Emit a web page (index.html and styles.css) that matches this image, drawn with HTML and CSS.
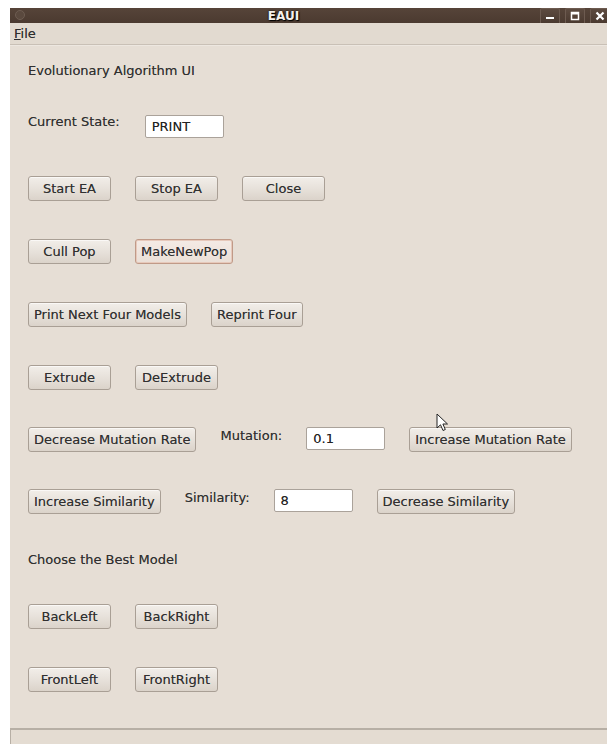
FILE: index.html
```html
<!DOCTYPE html>
<html>
<head>
<meta charset="utf-8">
<title>EAUI</title>
<link rel="stylesheet" href="styles.css">
</head>
<body>
<div class="window">
  <div class="titlebar">
    <span class="title-dot"></span>
    <span class="title">EAUI</span>
    <div class="wm-buttons">
      <span class="wm-btn"><svg width="10" height="10" viewBox="0 0 10 10"><rect x="1" y="6" width="8" height="2" fill="#fff"/></svg></span>
      <span class="wm-btn"><svg width="10" height="10" viewBox="0 0 10 10"><rect x="1.5" y="1.5" width="7" height="7" fill="none" stroke="#fff" stroke-width="1.5"/><rect x="1.5" y="1.5" width="7" height="2" fill="#fff"/></svg></span>
      <span class="wm-btn close"><svg width="10" height="10" viewBox="0 0 10 10"><path d="M1.5 1.5 L8.5 8.5 M8.5 1.5 L1.5 8.5" stroke="#fff" stroke-width="2.2"/></svg></span>
    </div>
  </div>
  <div class="menubar"><span class="menu-item"><u>F</u>ile</span></div>

  <div class="content">
    <div class="row heading">Evolutionary Algorithm UI</div>

    <div class="row state-row">
      <span class="label state-label">Current State:</span>
      <span class="field state-field">PRINT</span>
    </div>

    <div class="row after-state">
      <button class="btn">Start EA</button>
      <button class="btn">Stop EA</button>
      <button class="btn">Close</button>
    </div>

    <div class="row">
      <button class="btn">Cull Pop</button>
      <button class="btn focused">MakeNewPop</button>
    </div>

    <div class="row">
      <button class="btn">Print Next Four Models</button>
      <button class="btn">Reprint Four</button>
    </div>

    <div class="row">
      <button class="btn">Extrude</button>
      <button class="btn">DeExtrude</button>
    </div>

    <div class="row snug">
      <button class="btn">Decrease Mutation Rate</button>
      <span class="label">Mutation:</span>
      <span class="field">0.1</span>
      <button class="btn">Increase Mutation Rate</button>
    </div>

    <div class="row snug">
      <button class="btn">Increase Similarity</button>
      <span class="label">Similarity:</span>
      <span class="field">8</span>
      <button class="btn">Decrease Similarity</button>
    </div>

    <div class="row heading choose">Choose the Best Model</div>

    <div class="row near">
      <button class="btn">BackLeft</button>
      <button class="btn">BackRight</button>
    </div>

    <div class="row">
      <button class="btn">FrontLeft</button>
      <button class="btn">FrontRight</button>
    </div>
  </div>

  <div class="statusbar"></div>

  <svg class="pointer" width="14" height="20" viewBox="0 0 14 20">
    <path d="M1 1 L1 15 L4.5 11.8 L7 17.5 L9.3 16.5 L6.9 11 L11.5 11 Z" fill="#fff" stroke="#222" stroke-width="1" stroke-linejoin="round"/>
  </svg>
</div>
</body>
</html>
```

FILE: styles.css
```css
html, body {
  margin: 0;
  padding: 0;
  background: #ffffff;
}

body {
  width: 607px;
  height: 744px;
  overflow: hidden;
  font-family: "DejaVu Sans", "Liberation Sans", sans-serif;
  font-size: 13px;
  color: #303030;
}

.window {
  position: relative;
  margin: 8px 0 0 10px;
  height: 736px;
  background: #e6ded5;
  display: flex;
  flex-direction: column;
}

/* window manager title strip */
.titlebar {
  position: relative;
  height: 15px;
  background: linear-gradient(#564439, #4b3a30);
  display: flex;
  align-items: center;
  justify-content: center;
  overflow: hidden;
}

.title-dot {
  position: absolute;
  left: 5px;
  top: 2px;
  width: 8px;
  height: 8px;
  border-radius: 50%;
  border: 1px solid #6e5d52;
  background: #5a493e;
}

.title {
  color: #f4f0ec;
  font-weight: bold;
  font-size: 12px;
  line-height: 14px;
  margin-left: -50px;
  text-shadow: 0 0 2px #000, 1px 1px 1px #000;
}

.wm-buttons {
  position: absolute;
  right: -3px;
  top: 0;
  display: flex;
  gap: 5px;
}

.wm-btn {
  width: 20px;
  height: 15px;
  border: 1px solid #6d5b50;
  border-bottom: none;
  border-radius: 2px 2px 0 0;
  background: linear-gradient(#5d4b40, #4a392f);
  display: flex;
  align-items: center;
  justify-content: center;
  box-sizing: border-box;
}

.menubar {
  height: 21px;
  background: #e2dad0;
  border-bottom: 1px solid #c9c0b6;
  box-shadow: 0 1px 0 #ede7e0;
  display: flex;
  align-items: center;
  padding-left: 4px;
}

.menu-item {
  font-size: 13px;
  color: #2e2e2e;
  text-shadow: 0 0 0.6px rgba(0, 0, 0, 0.45);
}

.content {
  flex: 1;
  display: flex;
  flex-direction: column;
  padding: 13px 0 0 18px;
  text-shadow: 0 0 0.6px rgba(0, 0, 0, 0.45);
}

.row {
  height: 25px;
  display: flex;
  align-items: flex-start;
  gap: 24px;
  margin-top: 38px;
}

.row.heading {
  align-items: center;
}

.content > .row:first-child {
  margin-top: 0;
}

.row.state-row {
  margin-top: 31px;
  gap: 25px;
}

.row.after-state,
.row.snug {
  margin-top: 37px;
}

.row.choose {
  margin-top: 33px;
}

.row.near {
  margin-top: 32px;
}

.label {
  padding-top: 1px;
  color: #303030;
}

.state-label {
  padding-top: 0;
}

.btn {
  font: inherit;
  color: #303030;
  text-shadow: inherit;
  height: 25px;
  min-width: 83px;
  padding: 0 5px;
  background: linear-gradient(#f2eee9, #e6e0d9 55%, #dbd3ca);
  border: 1px solid #a99f95;
  border-radius: 3px;
  box-shadow: inset 0 1px 0 #faf8f6;
  margin: 0;
}

.btn.focused {
  border-color: #c09a88;
  background: linear-gradient(#f4ebe5, #eadfd7);
  box-shadow: inset 0 0 0 1px #e7c9bb;
}

.field {
  width: 79px;
  height: 23px;
  box-sizing: border-box;
  background: #fff;
  border: 1px solid #aaa29a;
  border-radius: 2px;
  padding: 3px 0 0 6px;
  color: #222;
}

.state-field {
  margin-top: 1px;
}

.statusbar {
  height: 14px;
  border-top: 2px solid #b7afa5;
  border-left: 1px solid #b7afa5;
  background: #e4dcd2;
}

.pointer {
  position: absolute;
  left: 426px;
  top: 405px;
}
```
